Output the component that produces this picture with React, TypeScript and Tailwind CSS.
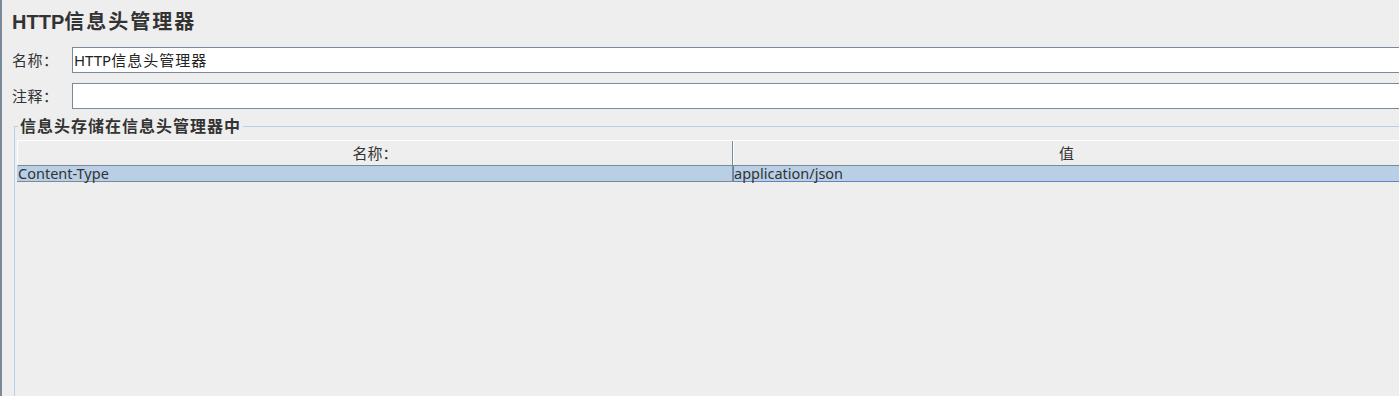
import React from "react";

const FONT = '"Noto Sans", "Noto Sans CJK SC", sans-serif';

export default function App() {
  return (
    <div
      className="flex h-[396px] w-full overflow-hidden bg-[#eeeeee] text-[#333333]"
      style={{ fontFamily: FONT }}
    >
      <div className="w-[2px] shrink-0 bg-[#7a8a99]" />
      <div className="flex min-w-0 flex-1 flex-col pl-[10px]">
        <div className="mt-[8px] h-[28px] text-[20px] font-bold leading-[28px] tracking-[2px] text-[#333333]">
          <span style={{ fontFamily: '"Liberation Sans", sans-serif' }} className="tracking-normal">HTTP</span>
          信息头管理器
        </div>

        <div className="mt-[11px] flex h-[26px] items-center">
          <div className="w-[60px] shrink-0 text-[15px] leading-[26px] tracking-[0.5px]">名称：</div>
          <div className="flex h-[26px] flex-1 items-center border border-r-0 border-[#7a8a99] bg-white pl-[1px] text-[15px] leading-[24px] tracking-[1px] text-[#222222]">
            <span className="tracking-normal">HTTP</span>信息头管理器
          </div>
        </div>

        <div className="mt-[10px] flex h-[26px] items-center">
          <div className="w-[60px] shrink-0 text-[15px] leading-[26px] tracking-[0.5px]">注释：</div>
          <div className="h-[26px] flex-1 border border-r-0 border-[#7a8a99] bg-white" />
        </div>

        <fieldset className="mt-[7px] ml-[2px] flex min-h-0 flex-1 flex-col border-t border-l border-[#b8cfe5] pl-[2px]">
          <legend className="ml-[1px] px-[2px] text-[16px] font-bold leading-[20px] tracking-[1px] text-[#333333]">
            信息头存储在信息头管理器中
          </legend>
          <div className="mt-[4px] flex flex-col">
            <div className="flex h-[26px] border-t border-l border-t-white border-l-white border-b border-b-[#7a8a99] text-[15px]">
              <div className="flex w-[715px] shrink-0 items-center justify-center border-r border-[#7a8a99]">
                名称：
              </div>
              <div className="flex flex-1 items-center justify-center border-l border-white">值</div>
            </div>
            <div className="flex h-[16px] bg-[#b8cfe5] text-[14.5px] leading-[15px] text-[#333333]">
              <div className="w-[716px] shrink-0 border-r border-b border-[#7a8a99] pl-[1px]">Content-Type</div>
              <div className="flex-1 border border-r-0 border-t-0 border-[#6382bf]">application/json</div>
            </div>
          </div>
        </fieldset>
      </div>
    </div>
  );
}
